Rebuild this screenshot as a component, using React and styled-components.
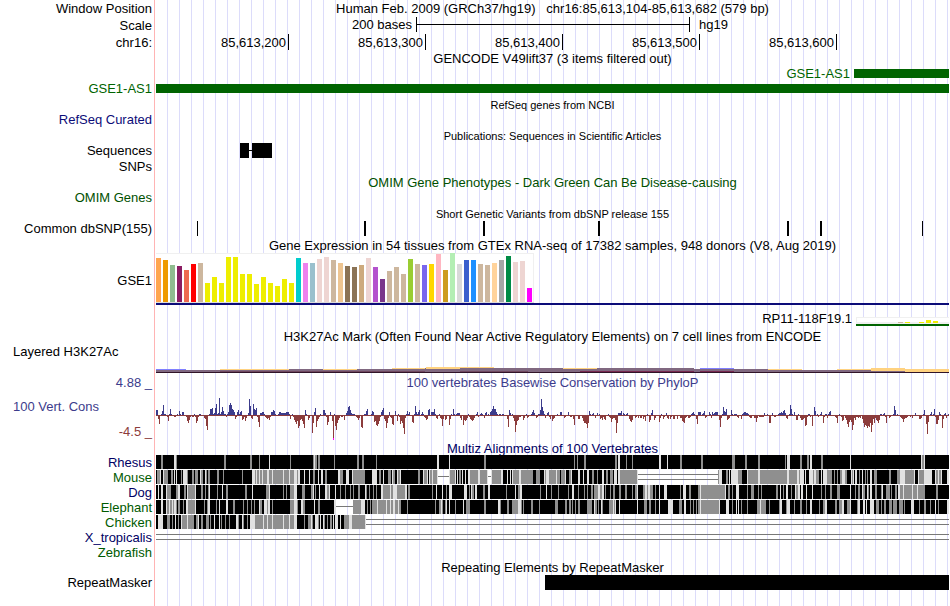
import React from "react";
import styled, { createGlobalStyle } from "styled-components";

const GlobalStyle = createGlobalStyle`
  * { box-sizing: border-box; }
  body { margin: 0; background: #fff; }
`;

const INK = {
  black: "#000000",
  gene: "#006400",
  omim: "#005000",
  navy: "#0c0c78",
  deepBlue: "#000064",
  species: "#005a00",
  consUp: "#3c3c8c",
  consDown: "#8c3c3c",
};

const SPAN = 793;

/* ---------- layout parts ---------- */

const Browser = styled.main`
  min-height: 100vh;
  padding-right: 1px;
  font-family: "Liberation Sans", Arial, Helvetica, sans-serif;
  font-size: 13px;
  line-height: 15px;
  color: #000;
  background:
    linear-gradient(#ffb4b4, #ffb4b4) 154px 0 / 1px 100% no-repeat,
    repeating-linear-gradient(to right, transparent 0 11px, #dcdcfa 11px 12px) 156px 0 no-repeat;
`;

const Row = styled.section`
  display: grid;
  grid-template-columns: 156px minmax(0, 1fr);
  height: ${(p) => p.$h}px;
`;

const Label = styled.div`
  display: flex;
  align-items: ${(p) => p.$align || "center"};
  justify-content: ${(p) => (p.$left ? "flex-start" : "flex-end")};
  padding: 0 4px 0 13px;
  white-space: nowrap;
  color: ${(p) => p.$ink || INK.black};
`;

const Data = styled.div`
  grid-column: 2;
  min-width: 0;
`;

const Title = styled.h2`
  grid-column: 2;
  margin: 0;
  align-self: ${(p) => (p.$end ? "end" : "center")};
  text-align: center;
  white-space: pre;
  font-weight: 400;
  font-size: ${(p) => (p.$small ? 11 : 13)}px;
  line-height: ${(p) => (p.$small ? 12 : 15)}px;
  color: ${(p) => p.$ink || INK.black};
`;

const ConsLabels = styled.div`
  display: flex;
  flex-direction: column;
  justify-content: space-between;
  padding: 9px 4px 2px 13px;
`;

const ConsText = styled.span`
  align-self: ${(p) => (p.$down ? "flex-end" : "flex-start")};
  color: ${(p) => (p.$down ? INK.consDown : INK.consUp)};
`;

const ScaleGrid = styled.div`
  grid-column: 2;
  display: grid;
  grid-template-columns: 260fr 274fr 259fr;
  height: 15px;
`;

const ScaleText = styled.span`
  text-align: ${(p) => (p.$end ? "right" : "left")};
  padding: ${(p) => (p.$end ? "0 4px 0 0" : "0 0 0 9px")};
`;

const ScaleBar = styled.div`
  display: flex;
  align-items: center;
  border: solid #000;
  border-width: 0 1px;

  &::before {
    content: "";
    flex: 1;
    height: 1px;
    background: #000;
  }
`;

const Ruler = styled.div`
  grid-column: 2;
  display: grid;
  grid-template-columns: 133fr 137fr 137fr 137fr 137fr 112fr;
  height: 15px;
`;

const Mark = styled.span`
  border-right: 1px solid #000;
  padding: 1px 2px 0 0;
  text-align: right;
`;

const Item = styled.div`
  grid-column: 2;
  display: grid;
  grid-template-columns: ${(p) => p.$start}fr ${(p) => SPAN - p.$start}fr;
  align-items: ${(p) => (p.$end ? "end" : "center")};
`;

const ItemName = styled.span`
  padding-right: 4px;
  text-align: right;
  color: ${(p) => p.$ink || INK.black};
`;

const Exon = styled.div`
  grid-column: 2;
  height: ${(p) => p.$h || 9}px;
  background: ${(p) => p.$ink || INK.black};
`;

const Chart = styled.svg`
  display: block;
  width: 100%;
  height: ${(p) => p.$h}px;
  shape-rendering: crispEdges;
`;

function Plot({ h, w = SPAN, label, children }) {
  return (
    <Chart $h={h} viewBox={`0 0 ${w} ${h}`} preserveAspectRatio="none" role="img" aria-label={label}>
      {children}
    </Chart>
  );
}

/* ---------- expression ---------- */

const YELLOWS = [19, 25, 19, 45, 45, 28, 28, 18, 25, 19, 16, 23, 19].map((h) => [h, "#eeee00"]);

const TISSUES = [
  [44, "#ffa54f"], [42, "#ee9a00"], [37, "#8fbc8f"], [36, "#8b1c62"], [32, "#ee6a50"],
  [38, "#ff0000"], [39, "#cdb79e"], ...YELLOWS, [44, "#00cdcd"], [39, "#ee82ee"],
  [39, "#9ac0cd"], [43, "#eed5d2"], [45, "#eed5d2"], [42, "#cdb79e"], [39, "#eec591"],
  [36, "#8b7355"], [35, "#8b7355"], [37, "#cdaa7d"], [44, "#eed5d2"], [35, "#b452cd"],
  [23, "#7a378b"], [31, "#cdb79e"], [35, "#cdb79e"], [28, "#cdb79e"], [43, "#9acd32"],
  [38, "#cdb79e"], [37, "#7a67ee"], [38, "#ffd700"], [48, "#ffb6c1"], [32, "#cd9b1d"],
  [49, "#b4eeb4"], [38, "#d9d9d9"], [42, "#3a5fcd"], [42, "#1e90ff"], [38, "#cdb79e"],
  [37, "#cdb79e"], [39, "#ffd39b"], [42, "#a6a6a6"], [46, "#008b45"], [40, "#eed5d2"],
  [41, "#eed5d2"], [14, "#ff00ff"],
];

function Expression() {
  return (
    <Plot h={52} label="GSE1 expression">
      <rect x="0" y="0" width="378" height="50" fill="#f0f0f0" />
      <rect x="0" y="1" width="377" height="48" fill="#fff" />
      <rect x="0" y="49" width="378" height="1" fill="#dcdcdc" />
      {TISSUES.map(([h, c], i) => (
        <rect key={i} x={i * 7} y={49 - h} width="5" height={h} fill={c} />
      ))}
      <rect x="0" y="50" width={SPAN} height="2" fill={INK.navy} />
    </Plot>
  );
}

const MINI_BARS = [[42, 1, "#cdb79e"], [49, 1, "#eeee00"], [63, 1, "#eeee00"], [70, 3, "#eeee00"], [77, 2, "#eeee00"]];

function MiniExpression() {
  return (
    <Plot h={9} w={93} label="RP11-118F19.1 expression">
      <rect x="0" y="0" width="93" height="7" fill="#f0f0f0" />
      <rect x="1" y="1" width="92" height="4" fill="#fff" />
      {MINI_BARS.map(([x, h, c]) => (
        <rect key={x} x={x} y={6 - h} width="5" height={h} fill={c} />
      ))}
      <rect x="0" y="7" width="93" height="2" fill={INK.gene} />
    </Plot>
  );
}

/* ---------- histone mark: x, y, width, height, colour ---------- */

const MARK_LAYERS = [
  [0, 2, 30, 1, "#8080ff"], [0, 3, 133, 3, "#806880"], [64, 2, 69, 1, "#ffd280"],
  [133, 2, 136, 4, "#806880"], [167, 2, 34, 1, "#ffd280"], [201, 2, 68, 4, "#806880"],
  [236, 1, 34, 1, "#ffd280"], [64, 4, 206, 1, "#704860"],
  [269, 1, 269, 5, "#806880"], [236, 2, 34, 1, "#806880"], [270, 0, 68, 1, "#ffd280"],
  [270, 1, 34, 1, "#ffd280"], [407, 1, 34, 1, "#ffd280"], [304, 4, 68, 1, "#704860"],
  [424, 4, 154, 1, "#782850"], [538, 2, 40, 3, "#806880"], [544, 1, 34, 1, "#8080ff"],
  [544, 4, 34, 1, "#782850"],
  [578, 2, 34, 4, "#806880"], [612, 3, 181, 3, "#806880"], [612, 2, 34, 1, "#ffd280"],
  [681, 2, 34, 1, "#ffd280"], [715, 1, 34, 3, "#ffd280"], [749, 2, 44, 3, "#ffd280"],
];

function HistoneMark() {
  return (
    <Plot h={6} label="H3K27Ac signal">
      {MARK_LAYERS.map(([x, y, w, h, c], i) => (
        <rect key={i} x={x} y={y} width={w} height={h} fill={c} />
      ))}
      <rect x="0" y="5" width={SPAN} height="1" fill="#301428" />
    </Plot>
  );
}

/* ---------- conservation: "start:v,v,v" ---------- */

const SCORES = `0:5,5,-4,-9,-1,1,4,10,1,1,-1,-2,-6,1,6,1,-1,-1,-2,-2,-1,1,-1,4,1,-1,3,3,-1,-1,-2,-6,-8,-5,-2,-1,-2,-2,1,-2,-8,-6,-2,1,1,-1
46:-1,-1,-3,-4,-11,-15,-1,1,6,6,7,1,2,7,11,1,2,17,1,3,8,4,1,1,-2,1,3,10,12,10,6,5,3,-4,-2,3,5,1,3,4,-5,-4,-2,-6,-3,-1,2,16,9,-3,-4,11,6,5,7,-2
102:-7,-12,2,2,3,3,1,-2,-3,-4,-3,-5,-2,3,3,5,4,1,-1,-1,1,3,3,2,2,2,2,2,3,3,3,1,-4,-1,1,-2,-5,-7,-9,-6,-13,-11,-5,-4,-6,-9,-13,5,1,-1,-5,-3,-1,-1,-18,-8,3,7,-12,-6,-4,-2,1,-1,-1,5,5,2
170:-2,-10,-7,-1,3,-1,-6,-25,1,-11,-15,-8,-5,-3,-1,-2,-2,-1,-5,-1,2,4,8,9,5,2,1,1,1,-1,-2,-3,-5,-3,-1,-12,-13,-1,1,1,4,6,-1,-1,-1,1,4,3
218:-7,-6,-10,-11,-9,-6,-2,3,5,7,-4,-6,-13,-8,-3,3,-2,-3,-9,-10,-1,4,-1,-6,1,-2,-9,-6,-8,-13,-19,-3,1,4,1,3,-1,-1,-7,-8,1,9,3,1,3,5
264:-1,1,3,1,-2,-3,-5,-4,5,6,-1,3,3,3,6,1,-3,-4,-1,1,-3,-4,-11,-4,-1,-5,-4,-1,-1,-10,-4,1,-1,6,1,-1,1,2,2,2,-3,-5,-1,-10,-5,-6,-5,-3,1,-2,-4,-5,-6,-5,-3,-1,1,3,-2,-1,1,2,1,-1,-3,2,3,-1,1
334:3,4,6,9,6,6,3,1,-1,1,1,-1,1,1,-1,-1,-1,-4,-12,5,2,-1,1,-3,-6,-17,-10,-6,-5,-2,-2,-1,-1,-5,-3,-1,1,-3,-2,-1,-1,1,3,5,2,-1,-3,-2,1,1,5,16,8,4,1,-3,-1,2,3,-2,-4,-1,-6,-4,-3,-1,-1,1,-1,-1,3,3,-1,-1,-3,-2
410:-1,-1,3,-1,-2,-2,-1,-4,-10,-1,-1,-1,-4,-4,-1,-1,-3,-6,-8,-8,-9,-13,-8,4,1,-1,1,2,-1,-3,-1,2,-1,1,-4,-3,-5,-2,-4,-5,-1,-1,1,-2,-3,-7,-4,-3,-3,-5,-18,-8,2,2,2,4,-1,2,1,-1,1,2,-1,-4,-6,-7,-5,-1,-1,-3,-2,-1,-3,-1,-3,-3,-1,-4,-2,-6,-1,1,-1,-7,-5,2,5,-1,-5,-3,-1,-1,-1,-7,-3,1,-1,-4,-2,-1,2,-3,-4,-1,-4,-2,-1,-4,-4,-1,-1,-4
524:-3,-3,-6,-7,-8,-3,-2,-1,-3,-3,-2,1,2,3,1,-1,-4,-9,3,3,3,-1,1,2,4,-3,-2,-1,-1,3,1,-3,3,1,2,3,3,3,-1,-5,-12,-3,1,8,4,3,6,-5,-4,-3,-1,5,1,-1,1,1,1,-2,-3,-1,-1,-4,1,2,3,3,2,2,1,-2,-3,-3,-1,-1,-3,-3,-7,-3,-1,-2,-2,-2,-2,-2,2,-1,-1,1,-1,-8,-8,-1,2,-1,-2,-2,-1,-1,1
623:2,2,3,2,4,5,2,-3,-4,-1,1,10,6,1,-1,3,-1,-5,-5,1,-1,-3,-5,-5,-4,-3,-11,-10,-2,1,1,-2,-1,-11,-1,8,4,-1,1,-2,-1,1,3,-1,-8,-2,1,1,-3,1,3,4,-1,-1,-1,-1,-2,-3,-8,-1,1,-1,-2,-6,-5,-1,-3,-5,-9,-12,-7,-5,-7,-15,-10,-3,-5,-2,-2,-3,-2,-3,-1,-4,-8,-12,-10,-11,-13,-11,-12,-8,-17,-10,-4,-8,-3,-5,-6,-8,-5,1,1
727:1,2,-2,-8,-1,-1,-3,-2,-1,-1,1,9,5,-1,1,-1,-1,-2,-3,-4,-7,-4,-3,-3,-2,-1,-1,-2,-1,-3,-1,-1,2,-1,-1,-1,-4,-4,-3,-1,1,5,-1,-9,-19,-7,-1,1,3,-1,1,6,-2,-9,-9,-5,3,1,-1,-13,-4,1,2,-3,-1,1,-1`;

const scores = new Array(SPAN).fill(-1);
SCORES.split("\n").forEach((line) => {
  const [start, values] = line.split(":");
  values.split(",").forEach((v, i) => {
    if (Number(start) + i < SPAN) scores[Number(start) + i] = Number(v);
  });
});

const BASE = 25;
const upPath = scores.map((v, x) => (v > 0 ? `M${x} ${BASE}v${-v}h1v${v}z` : "")).join("");
const downPath = scores.map((v, x) => (v < 0 ? `M${x} ${BASE}v${-v}h1v${v}z` : "")).join("");

function Conservation() {
  return (
    <Plot h={51} label="PhyloP conservation scores">
      <rect x="0" y={BASE} width={SPAN} height="1" fill={INK.consDown} />
      <path d={upPath} fill={INK.consUp} />
      <path d={downPath} fill={INK.consDown} />
      <rect x="177" y="48" width="1" height="2" fill="#ff00ff" />
    </Plot>
  );
}

/* ---------- alignments: shade letter + start; "-" one line, "=" two lines ---------- */

const RHESUS = "k0 g5 k7 l18 g20 k21 g68 k70 g94 k96 g103 k104 l113 k114 g134 k135 g157 l158 g159 k161 g162 k164 g178 k179 g201 k203 g206 k208 g220 k221 l281 k283 l293 k294 g328 k330 g418 k419 g421 k422 g428 k430 g459 k461 l462 k464 g470 k471 g476 k477 l503 k505 l511 k512 g524 k526 g545 k547 g576 k579 g589 k591 g602 k604 g629 k630 l631 k634 g644 k646 g651 k653 l654 k656 g665 k667 l694 k695 l765 g766 l768 k769";

const MOUSE = "k0 g1 l4 k5 l7 g8 k12 g15 k17 l18 k19 l20 k21 g25 k26 l27 g31 k32 g36 k38 g39 k42 l44 g45 k47 l49 g50 k51 g52 k54 g61 k63 g67 k68 g86 k87 l96 g99 l100 g101 l103 g104 l106 g107 l111 g113 l116 g117 l127 g128 l133 g134 l138 g141 l142 k144 l148 k149 l153 k154 g157 k159 l162 k163 l165 k167 g169 k171 l182 g184 k187 l190 k193 l196 g197 k209 l216 k221 g223 k225 l227 k228 g232 k235 l236 g237 k239 l241 g242 l244 k245 g262 k264 l267 g268 l271 k272 l273 g274 l276 g277 l281 -282 l293 g294 l299 k300 l301 k302 g303 k305 l306 k307 l309 k310 l312 g314 l322 g324 l331 -332 l335 g336 l345 k347 l351 k352 l354 k355 l356 g357 l363 g365 k377 g380 k384 l388 g389 l390 g393 l400 g401 k404 g405 l409 k410 g413 l415 k416 l422 k424 l427 k428 l431 k433 g436 k438 g441 k442 l446 k448 g450 k452 g454 k457 l458 k461 l462 g464 l481 =482 g562 l563 k566 g570 k572 l573 k574 l575 g582 k586 l591 g592 l602 g604 l631 g633 l641 g643 l644 k648 l649 k650 l653 g657 l658 g660 k663 l665 k666 l667 g671 k676 g678 k679 g681 k682 g684 l686 g689 k691 l695 g696 l697 k698 l699 k701 g703 k704 l706 k707 g709 k710 g711 k712 l714 k716 g718 k721 g733 k735 g741 l744 g749 l758 k759 l762 g763 l768 k776 l779 g780 l782 g783 l785 k786 l791";

const DOG = "k0 l2 k3 l5 k7 l10 g11 k15 g20 l22 k24 g28 k30 l31 g32 l39 k40 g45 k47 g49 k50 g52 l53 k54 g61 k62 l66 k67 g70 k72 g89 k91 l96 k97 g110 l113 k114 g127 k128 g130 k131 g134 l138 k141 g146 k149 g155 l157 k158 g159 k160 l163 k164 l169 g171 l173 k174 l179 k180 g184 k185 g189 k190 g194 k195 g197 k198 g202 k204 l209 g210 k211 g213 k214 g217 k218 g220 k221 l225 g227 l234 g235 l237 g241 l249 k251 g252 k254 g276 k277 l280 k281 l286 k287 g290 k291 l293 k296 l308 k311 g313 k314 l315 g316 k318 l319 k321 g327 k329 l332 k334 g350 k351 l359 k360 g362 l364 k366 g384 k385 l390 k391 g395 k396 g402 k403 g412 k413 l416 k418 g422 k423 g428 k429 g431 k432 g435 k437 g438 l442 g444 l446 k448 g449 k450 g454 k455 g457 k459 g463 k465 g469 k471 g476 k477 g479 l481 k482 g487 l489 g491 l492 g494 k497 g499 k500 l503 k504 l508 k511 g524 k525 l527 k530 g533 k535 g542 l544 g545 l569 k570 g572 k574 g576 k577 l580 k583 g591 k592 g595 k598 g602 k603 g605 k606 g620 k622 l624 k625 g627 k628 l630 k632 g635 k636 l639 g640 l642 k644 l645 k647 l650 k651 l656 k657 g665 k666 g669 k670 g674 k676 g681 k684 l694 k695 g699 k700 g702 k704 l706 g707 k709 l711 g712 k713 l714 k716 g719 k721 g725 l726 k727 g730 k734 g735 k736 g739 k741 l742 g744 l747 g748 l756 g757 l761 g762 k769 g780 k782";

const ELEPHANT = "k0 l5 k7 l10 g11 l13 g14 l16 g17 l18 g20 k21 g22 k24 g27 k28 l30 g32 l39 k40 g48 k49 g51 l52 k54 g60 k61 l63 k64 l70 k72 g77 k79 g87 k88 g91 k92 g95 k96 g98 k99 l103 g104 k106 l108 g111 l112 k114 g116 k117 g134 l138 g141 k142 l145 g147 k149 l158 k159 g162 k164 l178 -180 g197 l205 k209 g211 k212 g214 k215 g216 l221 g222 l230 g231 l234 g235 l237 g239 l242 g243 k245 g251 k252 g279 k280 g283 l285 g286 k287 g289 l290 k291 l293 k294 g299 k300 l307 k308 g310 k314 g328 k330 l342 g344 k345 g351 k353 g356 l362 g365 k366 g367 k368 g375 k377 g383 k384 g399 k402 g409 k411 g413 k415 g416 k417 g419 k420 g422 k424 g431 k436 l438 g439 k441 g442 k443 l445 g446 k447 g453 l457 g458 l459 k460 l463 k464 l481 k482 g488 k491 g493 k495 g499 k500 l503 k504 l512 k517 g523 k526 l528 k530 g534 k535 g537 k538 g540 k541 g542 l544 g545 l563 k564 l570 k573 g576 k577 l580 k581 l582 k583 g585 k586 g591 k592 g601 l604 g605 k610 g613 k614 g623 l624 k626 g630 l631 k634 g638 k639 g644 k646 g650 k651 l654 k656 g663 k664 g667 l669 k671 g679 k681 g683 l686 k688 g691 l694 k695 g701 l702 k704 l707 k709 l710 k711 l714 k718 g720 k723 g725 k726 g728 k730 g733 k736 g737 k741 g743 k747 g748 k749 l755 k758 g763 k764 g768 k770 g774 k775 l779 k780 g782 k783 l791";

const CHICKEN = "k0 l2 k7 g11 k14 g16 k17 l19 k20 g22 k23 l25 g26 l31 g32 k38 g40 l42 k43 g45 k47 g50 k53 g54 k55 l58 k59 l63 k64 g65 k66 g69 k70 g73 k74 l80 g82 k83 l86 g87 k88 g91 k92 l94 g99 l107 g108 l111 g112 l116 g117 l127 g128 l133 g134 l138 k141 g148 k149 g152 l155 g156 k157 l159 g162 k163 l164 k165 l167 g168 k169 g171 k172 g174 k176 l177 k178 l179 k182 l184 k185 g188 l193 g196 l209 =210";

const SPECIES = [
  ["Rhesus", INK.deepBlue, RHESUS],
  ["Mouse", INK.species, MOUSE],
  ["Dog", INK.deepBlue, DOG],
  ["Elephant", INK.species, ELEPHANT],
  ["Chicken", INK.species, CHICKEN],
  ["X_tropicalis", INK.deepBlue, "=0"],
  ["Zebrafish", INK.species, ""],
];

const SHADES = { k: "#000000", g: "#8f8f8f", l: "#e1e1e1" };
const GAP_LINES = { "-": [6], "=": [4, 9] };

function Alignment({ name, runs }) {
  const list = runs ? runs.split(" ") : [];
  return (
    <Plot h={14} label={`${name} alignment`}>
      {list.map((run, i) => {
        const kind = run[0];
        const x = Number(run.slice(1));
        const end = i + 1 < list.length ? Number(list[i + 1].slice(1)) : SPAN;
        if (SHADES[kind]) {
          return <rect key={i} x={x} y="0" width={end - x} height="14" fill={SHADES[kind]} />;
        }
        return GAP_LINES[kind].map((y) => (
          <rect key={`${i}-${y}`} x={x} y={y} width={end - x} height="1" fill="#787878" />
        ));
      })}
    </Plot>
  );
}

const VARIANTS = [[41, 1], [208, 2], [327, 2], [442, 2], [631, 2], [664, 2], [766, 1]];
const COORDINATES = ["85,613,200", "85,613,300", "85,613,400", "85,613,500", "85,613,600"];

function TitleRow({ h, ...rest }) {
  return (
    <Row $h={h}>
      <Title {...rest} />
    </Row>
  );
}

export default function App() {
  return (
    <>
      <GlobalStyle />
      <Browser>
        <Row $h={17}>
          <Label>Window Position</Label>
          <Title>{"Human Feb. 2009 (GRCh37/hg19)\u00a0\u00a0\u00a0chr16:85,613,104-85,613,682 (579 bp)"}</Title>
        </Row>
        <Row $h={17}>
          <Label>Scale</Label>
          <ScaleGrid>
            <ScaleText $end>200 bases</ScaleText>
            <ScaleBar />
            <ScaleText>hg19</ScaleText>
          </ScaleGrid>
        </Row>
        <Row $h={17}>
          <Label>chr16:</Label>
          <Ruler>
            {COORDINATES.map((c) => (
              <Mark key={c}>{c}</Mark>
            ))}
          </Ruler>
        </Row>

        <TitleRow h={15}>GENCODE V49lift37 (3 items filtered out)</TitleRow>
        <Row $h={13}>
          <Item $start={698}>
            <ItemName $ink={INK.gene}>GSE1-AS1</ItemName>
            <Exon $ink={INK.gene} />
          </Item>
        </Row>
        <Row $h={19}>
          <Label $ink={INK.gene}>GSE1-AS1</Label>
          <Item $start={0}>
            <Exon $ink={INK.gene} />
          </Item>
        </Row>

        <TitleRow h={14} $small>RefSeq genes from NCBI</TitleRow>
        <Row $h={17}>
          <Label $align="flex-start" $ink={INK.navy}>RefSeq Curated</Label>
        </Row>

        <TitleRow h={14} $small>Publications: Sequences in Scientific Articles</TitleRow>
        <Row $h={15}>
          <Label>Sequences</Label>
          <Data>
            <Plot h={15} label="Publication sequences">
              <rect x="84" y="0" width="9" height="15" />
              <rect x="93" y="7" width="3" height="1" />
              <rect x="96" y="0" width="20" height="15" />
            </Plot>
          </Data>
        </Row>
        <Row $h={17}>
          <Label>SNPs</Label>
        </Row>

        <TitleRow h={15} $end $ink={INK.omim}>OMIM Gene Phenotypes - Dark Green Can Be Disease-causing</TitleRow>
        <Row $h={17}>
          <Label $align="flex-start" $ink={INK.omim}>OMIM Genes</Label>
        </Row>

        <TitleRow h={14} $small>Short Genetic Variants from dbSNP release 155</TitleRow>
        <Row $h={16}>
          <Label $align="flex-start">Common dbSNP(155)</Label>
          <Data>
            <Plot h={15} label="Common variants">
              {VARIANTS.map(([x, w]) => (
                <rect key={x} x={x} y="0" width={w} height="15" />
              ))}
            </Plot>
          </Data>
        </Row>

        <TitleRow h={16}>Gene Expression in 54 tissues from GTEx RNA-seq of 17382 samples, 948 donors (V8, Aug 2019)</TitleRow>
        <Row $h={54}>
          <Label>GSE1</Label>
          <Data>
            <Expression />
          </Data>
        </Row>
        <Row $h={19}>
          <Item $start={700} $end>
            <ItemName>RP11-118F19.1</ItemName>
            <MiniExpression />
          </Item>
        </Row>

        <TitleRow h={18} $end>H3K27Ac Mark (Often Found Near Active Regulatory Elements) on 7 cell lines from ENCODE</TitleRow>
        <Row $h={23}>
          <Label $left $align="flex-start">Layered H3K27Ac</Label>
        </Row>
        <Row $h={7}>
          <Data>
            <HistoneMark />
          </Data>
        </Row>

        <Row $h={16}>
          <Label $ink={INK.consUp}>4.88 _</Label>
          <Title $ink={INK.consUp}>100 vertebrates Basewise Conservation by PhyloP</Title>
        </Row>
        <Row $h={51}>
          <ConsLabels>
            <ConsText>100 Vert. Cons</ConsText>
            <ConsText $down>-4.5 _</ConsText>
          </ConsLabels>
          <Data>
            <Conservation />
          </Data>
        </Row>

        <TitleRow h={14} $ink={INK.deepBlue}>Multiz Alignments of 100 Vertebrates</TitleRow>
        {SPECIES.map(([name, ink, runs]) => (
          <Row key={name} $h={15}>
            <Label $ink={ink}>{name}</Label>
            <Data>
              <Alignment name={name} runs={runs} />
            </Data>
          </Row>
        ))}

        <TitleRow h={15}>Repeating Elements by RepeatMasker</TitleRow>
        <Row $h={15}>
          <Label>RepeatMasker</Label>
          <Item $start={389}>
            <Exon $h={15} />
          </Item>
        </Row>
      </Browser>
    </>
  );
}
